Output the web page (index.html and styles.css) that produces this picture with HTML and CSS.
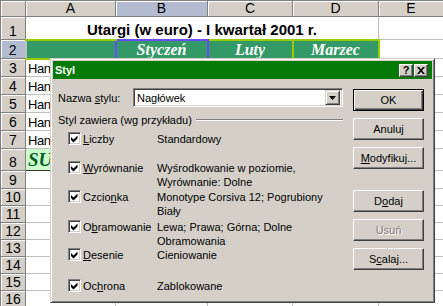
FILE: index.html
```html
<!DOCTYPE html>
<html lang="pl">
<head>
    <meta charset="UTF-8">
    <meta name="viewport" content="width=device-width, initial-scale=1.0">
    <title>Styl</title>
    <link rel="stylesheet" href="styles.css">
</head>
<body>
    <div class="page">
        <table class="sheet">
            <colgroup>
                <col class="c-row">
                <col class="c-a">
                <col class="c-b">
                <col class="c-c">
                <col class="c-d">
                <col class="c-e">
            </colgroup>
            <tr class="r-head">
                <th class="corner"></th>
                <th>A</th>
                <th class="sel">B</th>
                <th>C</th>
                <th>D</th>
                <th>E</th>
            </tr>
            <tr class="r-title">
                <th class="num">1</th>
                <td colspan="4" class="title">Utargi (w euro) - I kwartał 2001 r.</td>
                <td></td>
            </tr>
            <tr class="r-months">
                <th class="num sel">2</th>
                <td class="month month-a"></td>
                <td class="month month-b">Styczeń</td>
                <td class="month">Luty</td>
                <td class="month">Marzec</td>
                <td></td>
            </tr>
            <tr class="r-std"><th class="num">3</th><td class="name">Han</td><td></td><td></td><td></td><td></td></tr>
            <tr class="r-std"><th class="num">4</th><td class="name">Han</td><td></td><td></td><td></td><td></td></tr>
            <tr class="r-std"><th class="num">5</th><td class="name">Han</td><td></td><td></td><td></td><td></td></tr>
            <tr class="r-std"><th class="num">6</th><td class="name">Han</td><td></td><td></td><td></td><td></td></tr>
            <tr class="r-std"><th class="num">7</th><td class="name">Han</td><td></td><td></td><td></td><td></td></tr>
            <tr class="r-sum"><th class="num">8</th><td class="sum">SU</td><td></td><td></td><td></td><td></td></tr>
            <tr class="r-std"><th class="num">9</th><td></td><td></td><td></td><td></td><td></td></tr>
            <tr class="r-low"><th class="num">10</th><td></td><td></td><td></td><td></td><td></td></tr>
            <tr class="r-low"><th class="num">11</th><td></td><td></td><td></td><td></td><td></td></tr>
            <tr class="r-low"><th class="num">12</th><td></td><td></td><td></td><td></td><td></td></tr>
            <tr class="r-low"><th class="num">13</th><td></td><td></td><td></td><td></td><td></td></tr>
            <tr class="r-low"><th class="num">14</th><td></td><td></td><td></td><td></td><td></td></tr>
            <tr class="r-low"><th class="num">15</th><td></td><td></td><td></td><td></td><td></td></tr>
            <tr class="r-low"><th class="num">16</th><td></td><td></td><td></td><td></td><td></td></tr>
        </table>

        <div class="dialog">
            <div class="titlebar">
                <span class="title-text">Styl</span>
                <div class="caption-btns">
                    <span class="cap-btn">?</span>
                    <span class="cap-btn">
                        <svg width="8" height="7" viewBox="0 0 8 7"><path d="M0 0h2l2 2.3L6 0h2L5 3.5 8 7H6L4 4.7 2 7H0l3-3.5z" fill="#000"/></svg>
                    </span>
                </div>
            </div>

            <div class="dialog-body">
                <div class="main">
                    <div class="name-row">
                        <span class="name-label">Nazwa <u>s</u>tylu:</span>
                        <div class="combo">
                            <span class="combo-value">Nagłówek</span>
                            <span class="combo-arrow">
                                <svg width="7" height="4" viewBox="0 0 7 4"><path d="M0 0h7L3.5 4z" fill="#000"/></svg>
                            </span>
                        </div>
                    </div>

                    <div class="group-title">
                        <span>Styl zawiera (wg przykładu)</span>
                        <div class="etched"></div>
                    </div>

                    <div class="options">
                        <span class="check"><svg width="9" height="9" viewBox="0 0 9 9"><path d="M1 3l2.5 2.5L7.5 1.5V4.5L3.5 8.5 1 6z" fill="#000"/></svg></span>
                        <span class="opt-label"><u>L</u>iczby</span>
                        <span class="opt-desc">Standardowy</span>

                        <span class="check"><svg width="9" height="9" viewBox="0 0 9 9"><path d="M1 3l2.5 2.5L7.5 1.5V4.5L3.5 8.5 1 6z" fill="#000"/></svg></span>
                        <span class="opt-label"><u>W</u>yrównanie</span>
                        <span class="opt-desc">Wyśrodkowanie w poziomie,<br>Wyrównanie: Dolne</span>

                        <span class="check"><svg width="9" height="9" viewBox="0 0 9 9"><path d="M1 3l2.5 2.5L7.5 1.5V4.5L3.5 8.5 1 6z" fill="#000"/></svg></span>
                        <span class="opt-label">Czcio<u>n</u>ka</span>
                        <span class="opt-desc">Monotype Corsiva 12; Pogrubiony<br>Biały</span>

                        <span class="check"><svg width="9" height="9" viewBox="0 0 9 9"><path d="M1 3l2.5 2.5L7.5 1.5V4.5L3.5 8.5 1 6z" fill="#000"/></svg></span>
                        <span class="opt-label">O<u>b</u>ramowanie</span>
                        <span class="opt-desc">Lewa; Prawa; Górna; Dolne<br>Obramowania</span>

                        <span class="check"><svg width="9" height="9" viewBox="0 0 9 9"><path d="M1 3l2.5 2.5L7.5 1.5V4.5L3.5 8.5 1 6z" fill="#000"/></svg></span>
                        <span class="opt-label"><u>D</u>esenie</span>
                        <span class="opt-desc">Cieniowanie</span>

                        <span class="check"><svg width="9" height="9" viewBox="0 0 9 9"><path d="M1 3l2.5 2.5L7.5 1.5V4.5L3.5 8.5 1 6z" fill="#000"/></svg></span>
                        <span class="opt-label">Oc<u>h</u>rona</span>
                        <span class="opt-desc">Zablokowane</span>
                    </div>
                </div>

                <div class="buttons">
                    <span class="btn btn-default">OK</span>
                    <span class="btn">Anuluj</span>
                    <span class="btn"><u>M</u>odyfikuj...</span>
                    <span class="btn btn-gap">D<u>o</u>daj</span>
                    <span class="btn btn-disabled">Usuń</span>
                    <span class="btn">S<u>c</u>alaj...</span>
                </div>
            </div>
        </div>
    </div>
</body>
</html>
```

FILE: styles.css
```css
body {
    margin: 0;
    font-family: 'Liberation Sans', Arial, sans-serif;
    background-color: #fff;
}
.page {
    position: relative;
    width: 443px;
    height: 306px;
    overflow: hidden;
}

/* spreadsheet */
.sheet {
    border-collapse: collapse;
    table-layout: fixed;
    width: 443px;
}
.c-row { width: 25px; }
.c-a { width: 90px; }
.c-b { width: 92px; }
.c-c { width: 85px; }
.c-d { width: 86px; }
.c-e { width: 65px; }
.sheet td,
.sheet th {
    border: 1px solid #c0c0c0;
    padding: 0 2px;
    white-space: nowrap;
    overflow: hidden;
    vertical-align: bottom;
    font-size: 14px;
    line-height: 15px;
    font-weight: normal;
}
.sheet th {
    background-color: #d4d0c8;
    border-color: #808080;
    box-shadow: inset 1px 1px #fff;
    text-align: center;
    vertical-align: middle;
}
.sheet th.sel {
    background-color: #b3bbd0;
}
.sheet th.num {
    vertical-align: bottom;
}
.r-head { height: 16px; }
.r-title { height: 23px; }
.r-months { height: 19px; }
.r-std { height: 18px; }
.r-sum { height: 22px; }
.r-low { height: 17px; }
.sheet td.title {
    text-align: center;
    font-weight: bold;
    font-size: 15px;
    padding-bottom: 2px;
}
.sheet td.month {
    background-color: #339966;
    color: #fff;
    text-align: center;
    vertical-align: middle;
    font-family: 'Liberation Serif', serif;
    font-style: italic;
    font-weight: bold;
    font-size: 16px;
    border: 2px solid #99cc00;
}
.sheet td.month-a {
    border-left-color: #c0c0c0;
    border-right-width: 1px;
}
.sheet td.month-b {
    border-color: #6a4cff;
}
.sheet td.name {
    font-size: 13px;
    letter-spacing: -0.4px;
}
.sheet td.sum {
    background-color: #ccffcc;
    border: 1px solid #333;
    color: #0b5d2a;
    font-family: 'Liberation Serif', serif;
    font-style: italic;
    font-weight: bold;
    font-size: 19px;
    vertical-align: middle;
}

/* dialog */
.dialog {
    position: absolute;
    left: 50px;
    top: 58px;
    width: 385px;
    height: 245px;
    box-sizing: border-box;
    padding: 2px;
    background-color: #d4d0c8;
    border: 1px solid;
    border-color: #d4d0c8 #404040 #404040 #d4d0c8;
    box-shadow: inset 1px 1px #fff, inset -1px -1px #808080;
    font-size: 11px;
    color: #000;
}
.titlebar {
    display: flex;
    align-items: center;
    justify-content: space-between;
    height: 18px;
    padding: 0 4px 0 2px;
    background-color: #067a06;
}
.title-text {
    color: #fff;
    font-weight: bold;
    font-size: 11px;
}
.caption-btns {
    display: flex;
    gap: 1px;
}
.cap-btn {
    display: flex;
    align-items: center;
    justify-content: center;
    width: 14px;
    height: 13px;
    box-sizing: border-box;
    background-color: #d4d0c8;
    border: 1px solid;
    border-color: #fff #404040 #404040 #fff;
    box-shadow: inset -1px -1px #808080;
    font-weight: bold;
    font-size: 11px;
    line-height: 11px;
}
.dialog-body {
    display: flex;
    gap: 10px;
    padding: 9px 8px 0 5px;
}
.main {
    width: 285px;
}
.name-row {
    display: flex;
    align-items: center;
    height: 19px;
}
.name-label {
    width: 75px;
}
.combo {
    display: flex;
    align-items: center;
    justify-content: space-between;
    width: 210px;
    height: 19px;
    box-sizing: border-box;
    padding: 2px;
    background-color: #fff;
    border: 1px solid;
    border-color: #808080 #fff #fff #808080;
    box-shadow: inset 1px 1px #404040, inset -1px -1px #d4d0c8;
}
.combo-value {
    padding-left: 1px;
}
.combo-arrow {
    display: flex;
    align-items: center;
    justify-content: center;
    width: 15px;
    height: 15px;
    box-sizing: border-box;
    background-color: #d4d0c8;
    border: 1px solid;
    border-color: #d4d0c8 #404040 #404040 #d4d0c8;
    box-shadow: inset 1px 1px #fff, inset -1px -1px #808080;
}
.group-title {
    display: flex;
    align-items: center;
    margin-top: 6px;
    line-height: 14px;
}
.etched {
    flex: 1;
    margin-left: 4px;
    border-top: 1px solid #808080;
    border-bottom: 1px solid #fff;
}
.options {
    display: grid;
    grid-template-columns: 15px 74px 1fr;
    grid-template-rows: 29px 29px 30px 28px 31px 14px;
    margin-top: 5px;
    padding-left: 10px;
    line-height: 14px;
}
.check {
    display: flex;
    align-items: center;
    justify-content: center;
    width: 13px;
    height: 13px;
    box-sizing: border-box;
    background-color: #fff;
    border: 1px solid;
    border-color: #808080 #fff #fff #808080;
    box-shadow: inset 1px 1px #404040, inset -1px -1px #d4d0c8;
}
.buttons {
    display: flex;
    flex-direction: column;
    gap: 7px;
    padding-top: 1px;
}
.btn {
    display: flex;
    align-items: center;
    justify-content: center;
    width: 71px;
    height: 22px;
    box-sizing: border-box;
    border: 1px solid;
    border-color: #fff #404040 #404040 #fff;
    box-shadow: inset -1px -1px #808080;
}
.btn-default {
    border-color: #000;
    box-shadow: inset 1px 1px #fff, inset -1px -1px #404040, inset -2px -2px #808080;
}
.btn-gap {
    margin-top: 14px;
}
.btn-disabled {
    color: #808080;
    text-shadow: 1px 1px #fff;
}
```
